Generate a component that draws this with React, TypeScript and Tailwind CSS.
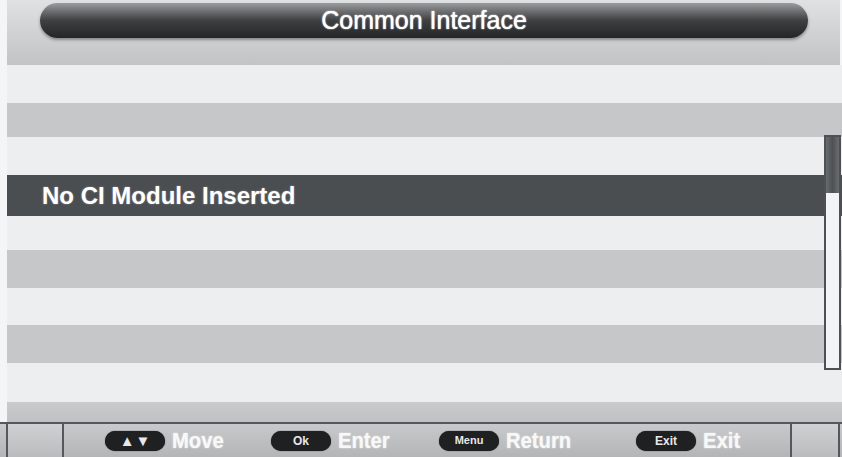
import React from 'react';

const rows = [
  { h: 'h-[38px]', tone: 'light' },
  { h: 'h-[34px]', tone: 'grey' },
  { h: 'h-[38px]', tone: 'light' },
  { h: 'h-[41px]', tone: 'selected', label: 'No CI Module Inserted' },
  { h: 'h-[34px]', tone: 'light' },
  { h: 'h-[38px]', tone: 'grey' },
  { h: 'h-[37px]', tone: 'light' },
  { h: 'h-[38px]', tone: 'grey' },
  { h: 'h-[39px]', tone: 'light' },
];

const toneClass: Record<string, string> = {
  light: 'bg-[#eceef0]',
  grey: 'bg-[#c5c7c9]',
  selected: 'bg-[#4b4e51] text-white',
};

const KeyHint: React.FC<{ keyLabel: React.ReactNode; text: string; width: string }> = ({ keyLabel, text, width }) => (
  <div className={`flex items-center gap-[7px] ${width}`}>
    <div className="flex h-[20px] w-[60px] items-center justify-center rounded-full bg-[#1f2022] text-[12px] font-bold leading-none text-[#e8e8e8] shadow-[0_0_1px_#000]">
      {keyLabel}
    </div>
    <span className="origin-left scale-x-[0.92] text-[22px] font-bold leading-none text-[#f8f8f8] [text-shadow:0_0_2px_rgba(255,255,255,0.7)]">
      {text}
    </span>
  </div>
);

export default function App() {
  return (
    <div className="relative flex h-[457px] w-[842px] flex-col overflow-hidden bg-[#f4f5f6] font-['Liberation_Sans',Arial,sans-serif]">
      {/* Title bar */}
      <div className="ml-[7px] mr-[2px] h-[65px] bg-linear-to-b from-[#dfe1e3] to-[#c1c3c5] pl-[33px] pr-[32px] pt-[3px]">
        <div className="flex h-[35px] items-center justify-center rounded-full bg-linear-to-b from-[#9a9c9e] via-[#3e4042] to-[#232527] shadow-[0_2px_3px_rgba(0,0,0,0.35)]">
          <span className="text-[25px] leading-none text-white [text-shadow:0_0_1px_#fff,0_0_2px_rgba(255,255,255,0.5)]">Common Interface</span>
        </div>
      </div>

      {/* List */}
      <div className="ml-[7px] flex flex-col">
        {rows.map((r, i) => (
          <div key={i} className={`flex items-center ${r.h} ${toneClass[r.tone]}`}>
            {r.label && (
              <span className="pl-[35px] text-[24px] font-bold leading-none [text-shadow:0_0_2px_rgba(255,255,255,0.4)]">{r.label}</span>
            )}
          </div>
        ))}
      </div>

      <div className="ml-[7px] h-[20px] bg-linear-to-b from-[#c9cbcd] to-[#bfc1c3]" />

      {/* Footer */}
      <div className="flex h-[35px] items-stretch border-t-2 border-[#55585a] bg-linear-to-b from-[#c7c9cb] to-[#b3b5b7]">
        <div className="ml-[6px] w-[58px] border-x-2 border-[#55585a] bg-linear-to-b from-[#cfd1d3] to-[#b9bbbd]" />
        <div className="flex flex-1 items-center pl-[41px]">
          <KeyHint
            width="w-[166px]"
            text="Move"
            keyLabel={
              <span className="flex items-center gap-[1px] text-[15px]">
                <span>▲</span>
                <span>▼</span>
              </span>
            }
          />
          <KeyHint width="w-[168px]" text="Enter" keyLabel="Ok" />
          <KeyHint width="w-[197px]" text="Return" keyLabel={<span className="text-[11px]">Menu</span>} />
          <KeyHint width="flex-1" text="Exit" keyLabel="Exit" />
        </div>
        <div className="mr-[2px] w-[50px] border-x-2 border-[#55585a] bg-linear-to-b from-[#cfd1d3] to-[#b9bbbd]" />
      </div>

      {/* Scrollbar */}
      <div className="absolute left-[824px] top-[135px] flex h-[235px] w-[17px] flex-col border-2 border-[#4e5153] bg-[#f3f4f5]">
        <div className="h-[56px] bg-linear-to-r from-[#6a6d70] via-[#4e5154] to-[#6a6d70]" />
      </div>
    </div>
  );
}
